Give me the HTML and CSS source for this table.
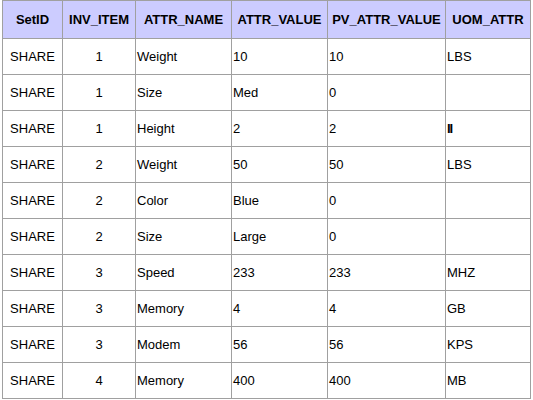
FILE: index.html
```html
<!DOCTYPE html>
<html>
<head>
<meta charset="utf-8">
<link rel="stylesheet" href="styles.css">
</head>
<body>
<table class="grid">
  <colgroup>
    <col class="c1"><col class="c2"><col class="c3"><col class="c4"><col class="c5"><col class="c6">
  </colgroup>
  <thead>
    <tr><th>SetID</th><th>INV_ITEM</th><th>ATTR_NAME</th><th>ATTR_VALUE</th><th>PV_ATTR_VALUE</th><th>UOM_ATTR</th></tr>
  </thead>
  <tbody>
    <tr><td class="ctr">SHARE</td><td class="ctr">1</td><td>Weight</td><td>10</td><td>10</td><td>LBS</td></tr>
    <tr><td class="ctr">SHARE</td><td class="ctr">1</td><td>Size</td><td>Med</td><td>0</td><td></td></tr>
    <tr><td class="ctr">SHARE</td><td class="ctr">1</td><td>Height</td><td>2</td><td>2</td><td><span class="glyph">II</span></td></tr>
    <tr><td class="ctr">SHARE</td><td class="ctr">2</td><td>Weight</td><td>50</td><td>50</td><td>LBS</td></tr>
    <tr><td class="ctr">SHARE</td><td class="ctr">2</td><td>Color</td><td>Blue</td><td>0</td><td></td></tr>
    <tr><td class="ctr">SHARE</td><td class="ctr">2</td><td>Size</td><td>Large</td><td>0</td><td></td></tr>
    <tr><td class="ctr">SHARE</td><td class="ctr">3</td><td>Speed</td><td>233</td><td>233</td><td>MHZ</td></tr>
    <tr><td class="ctr">SHARE</td><td class="ctr">3</td><td>Memory</td><td>4</td><td>4</td><td>GB</td></tr>
    <tr><td class="ctr">SHARE</td><td class="ctr">3</td><td>Modem</td><td>56</td><td>56</td><td>KPS</td></tr>
    <tr><td class="ctr">SHARE</td><td class="ctr">4</td><td>Memory</td><td>400</td><td>400</td><td>MB</td></tr>
  </tbody>
</table>
</body>
</html>
```
FILE: styles.css
```css
html, body {
  margin: 0;
  padding: 0;
  background: #ffffff;
}
body {
  padding: 0 0 0 2px;
  font-family: "Liberation Sans", Arial, sans-serif;
  font-size: 13px;
  color: #000;
}
.grid {
  border-collapse: collapse;
  table-layout: fixed;
  width: 528px;
}
.c1 { width: 60px; }
.c2 { width: 73px; }
.c3 { width: 96px; }
.c4 { width: 96px; }
.c5 { width: 118px; }
.c6 { width: 85px; }
.grid th, .grid td {
  border: 1px solid #a0a0a0;
  height: 36px;
  padding: 0 1px;
  box-sizing: border-box;
  white-space: nowrap;
  overflow: hidden;
}
.grid th {
  background: #ccccff;
  font-weight: bold;
  text-align: center;
  height: 38px;
}
.grid td { text-align: left; }
.grid td.ctr { text-align: center; }
.glyph {
  font-weight: bold;
  letter-spacing: -1px;
}
```
